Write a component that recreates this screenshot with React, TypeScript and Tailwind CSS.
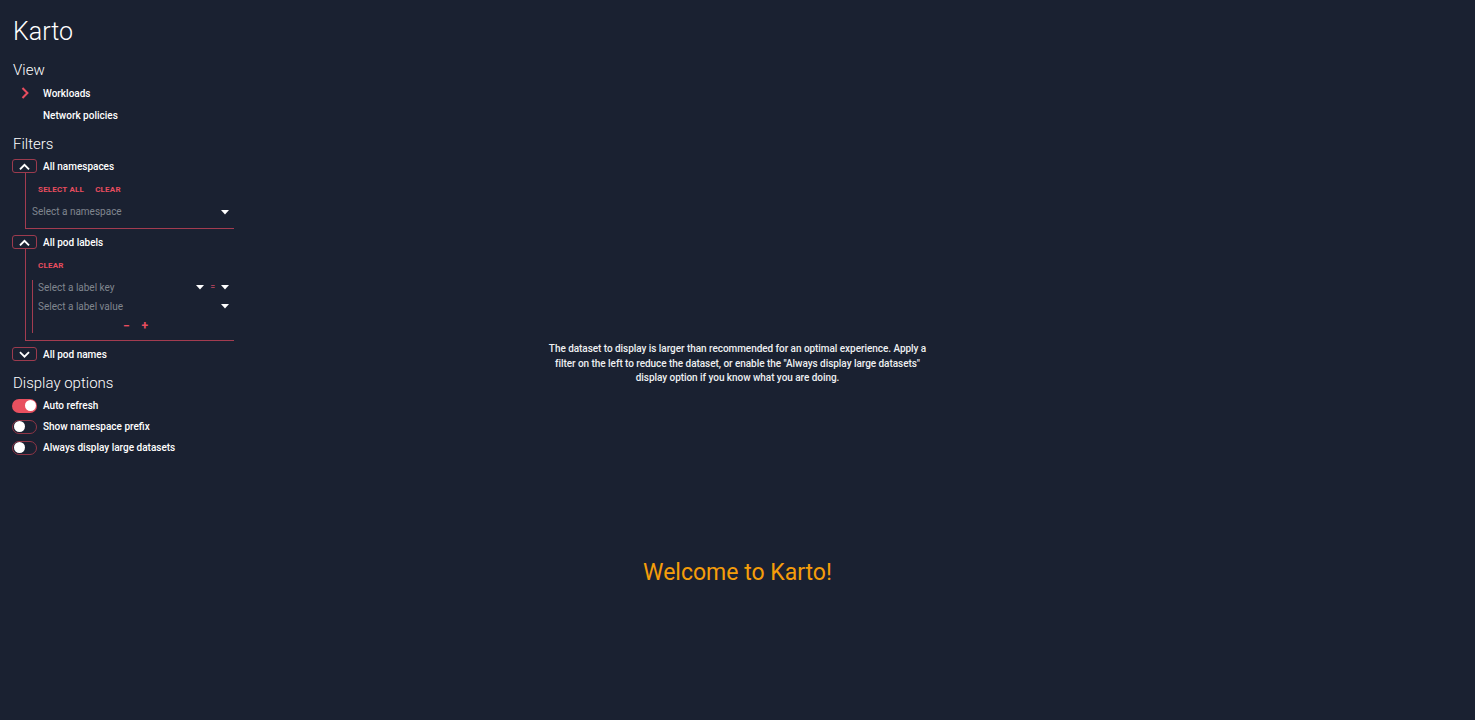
import React from 'react';

const RED = 'text-[#e84d5f]';

const Chevron: React.FC<{ dir: 'up' | 'down' | 'right'; className?: string; size?: number }> = ({ dir, className, size = 10 }) => {
  const d = dir === 'up' ? 'M1.5 7 L5 3.5 L8.5 7' : dir === 'down' ? 'M1.5 3.5 L5 7 L8.5 3.5' : 'M3.5 1.5 L7 5 L3.5 8.5';
  return (
    <svg width={size} height={size} viewBox="0 0 10 10" className={className}>
      <path d={d} fill="none" stroke="currentColor" strokeWidth={1.7} strokeLinecap="square" />
    </svg>
  );
};

const Caret: React.FC = () => (
  <svg width="8" height="5" viewBox="0 0 8 5" className="text-white">
    <path d="M0 0 L8 0 L4 4.5 Z" fill="currentColor" />
  </svg>
);

const ToggleButton: React.FC<{ dir: 'up' | 'down'; label: string }> = ({ dir, label }) => (
  <div className="flex items-center h-[14px] gap-[6px]">
    <div className="w-[25px] h-[14px] -ml-px rounded-[3px] border border-[#9c3b4e] flex items-center justify-center text-white">
      <Chevron dir={dir} size={11} />
    </div>
    <span className="text-[10px] font-medium text-white">{label}</span>
  </div>
);

const Switch: React.FC<{ on?: boolean; label: string }> = ({ on, label }) => (
  <div className="flex items-center h-[21px] gap-[6px]">
    <div
      className={
        on
          ? '-ml-px w-[25px] h-[14px] rounded-full bg-[#e8505f] flex items-center justify-end pr-[1px]'
          : '-ml-px w-[25px] h-[14px] rounded-full border border-[#8f3546] flex items-center pl-[1px]'
      }
    >
      <div className="w-[11px] h-[11px] rounded-full bg-white" />
    </div>
    <span className="text-[10px] font-medium text-white">{label}</span>
  </div>
);

export default function App() {
  return (
    <div className="grid min-h-screen bg-[#1a2131] font-['Roboto',_'Liberation_Sans',_sans-serif] text-white">
      {/* graph area, full width */}
      <main className="[grid-area:1/1] h-[720px] flex flex-col items-center">
        <p className="mt-[342px] w-[386px] text-center text-[10px] font-medium leading-[14.5px] tracking-[-0.05px] text-[#eef0f2]">
          The dataset to display is larger than recommended for an optimal experience. Apply a filter on the left to
          reduce the dataset, or enable the "Always display large datasets" display option if you know what you are doing.
        </p>
        <h2 className="mt-[174px] text-[23px] leading-[26px] text-[#f59d0a]">Welcome to Karto!</h2>
      </main>

      {/* control panel */}
      <aside className="[grid-area:1/1] self-start justify-self-start pl-[13px] pt-[17px] w-[240px]">
        <h1 className="text-[25px] leading-[30px] font-light">Karto</h1>

        <h3 className="mt-[13px] text-[15px] leading-[20px] font-light">View</h3>
        <div className="mt-[2px]">
          <div className="flex items-center h-[22px]">
            <Chevron dir="right" size={12} className={`${RED} ml-[6px] mr-[12px]`} />
            <span className="text-[10px] font-medium">Workloads</span>
          </div>
          <div className="flex items-center h-[22px] pl-[30px]">
            <span className="text-[10px] font-medium">Network policies</span>
          </div>
        </div>

        <h3 className="mt-[8px] text-[15px] leading-[20px] font-light">Filters</h3>

        <div className="mt-[5px]">
          <ToggleButton dir="up" label="All namespaces" />
          <div className="ml-[12px] w-[209px] h-[56px] border-l border-b border-[#a33c50] pl-[12px] pt-[12px]">
            <div className={`flex gap-[11px] text-[8px] leading-[10px] font-bold tracking-[0.2px] ${RED}`}>
              <span>SELECT ALL</span>
              <span>CLEAR</span>
            </div>
            <div className="mt-[11px] -ml-[6px] flex items-center justify-between pr-[5px]">
              <span className="text-[10px] leading-[12px] text-[#80868f]">Select a namespace</span>
              <Caret />
            </div>
          </div>
        </div>

        <div className="mt-[6px]">
          <ToggleButton dir="up" label="All pod labels" />
          <div className="ml-[12px] w-[209px] h-[92px] border-l border-b border-[#a33c50] pl-[12px] pt-[12px]">
            <div className={`text-[8px] leading-[10px] font-bold tracking-[0.2px] ${RED}`}>CLEAR</div>
            <div className="mt-[9px] -ml-[6px] w-[202px] h-[53px] border-l border-[#a33c50] pl-[5px] pr-[5px]">
              <div className="flex items-center h-[14px]">
                <span className="flex-1 text-[10px] text-[#80868f]">Select a label key</span>
                <Caret />
                <span className="mx-[6px] text-[8px] text-[#a8415a] font-bold">=</span>
                <Caret />
              </div>
              <div className="flex items-center justify-between h-[14px] mt-[5px]">
                <span className="text-[10px] text-[#80868f]">Select a label value</span>
                <Caret />
              </div>
              <div className={`flex justify-center gap-[12px] h-[14px] mt-[6px] pl-[4px] text-[12px] font-bold leading-[14px] ${RED}`}>
                <span>−</span>
                <span>+</span>
              </div>
            </div>
          </div>
        </div>

        <div className="mt-[6px]">
          <ToggleButton dir="down" label="All pod names" />
        </div>

        <h3 className="mt-[12px] text-[15px] leading-[20px] font-light">Display options</h3>
        <div className="mt-[2px]">
          <Switch on label="Auto refresh" />
          <Switch label="Show namespace prefix" />
          <Switch label="Always display large datasets" />
        </div>
      </aside>
    </div>
  );
}
